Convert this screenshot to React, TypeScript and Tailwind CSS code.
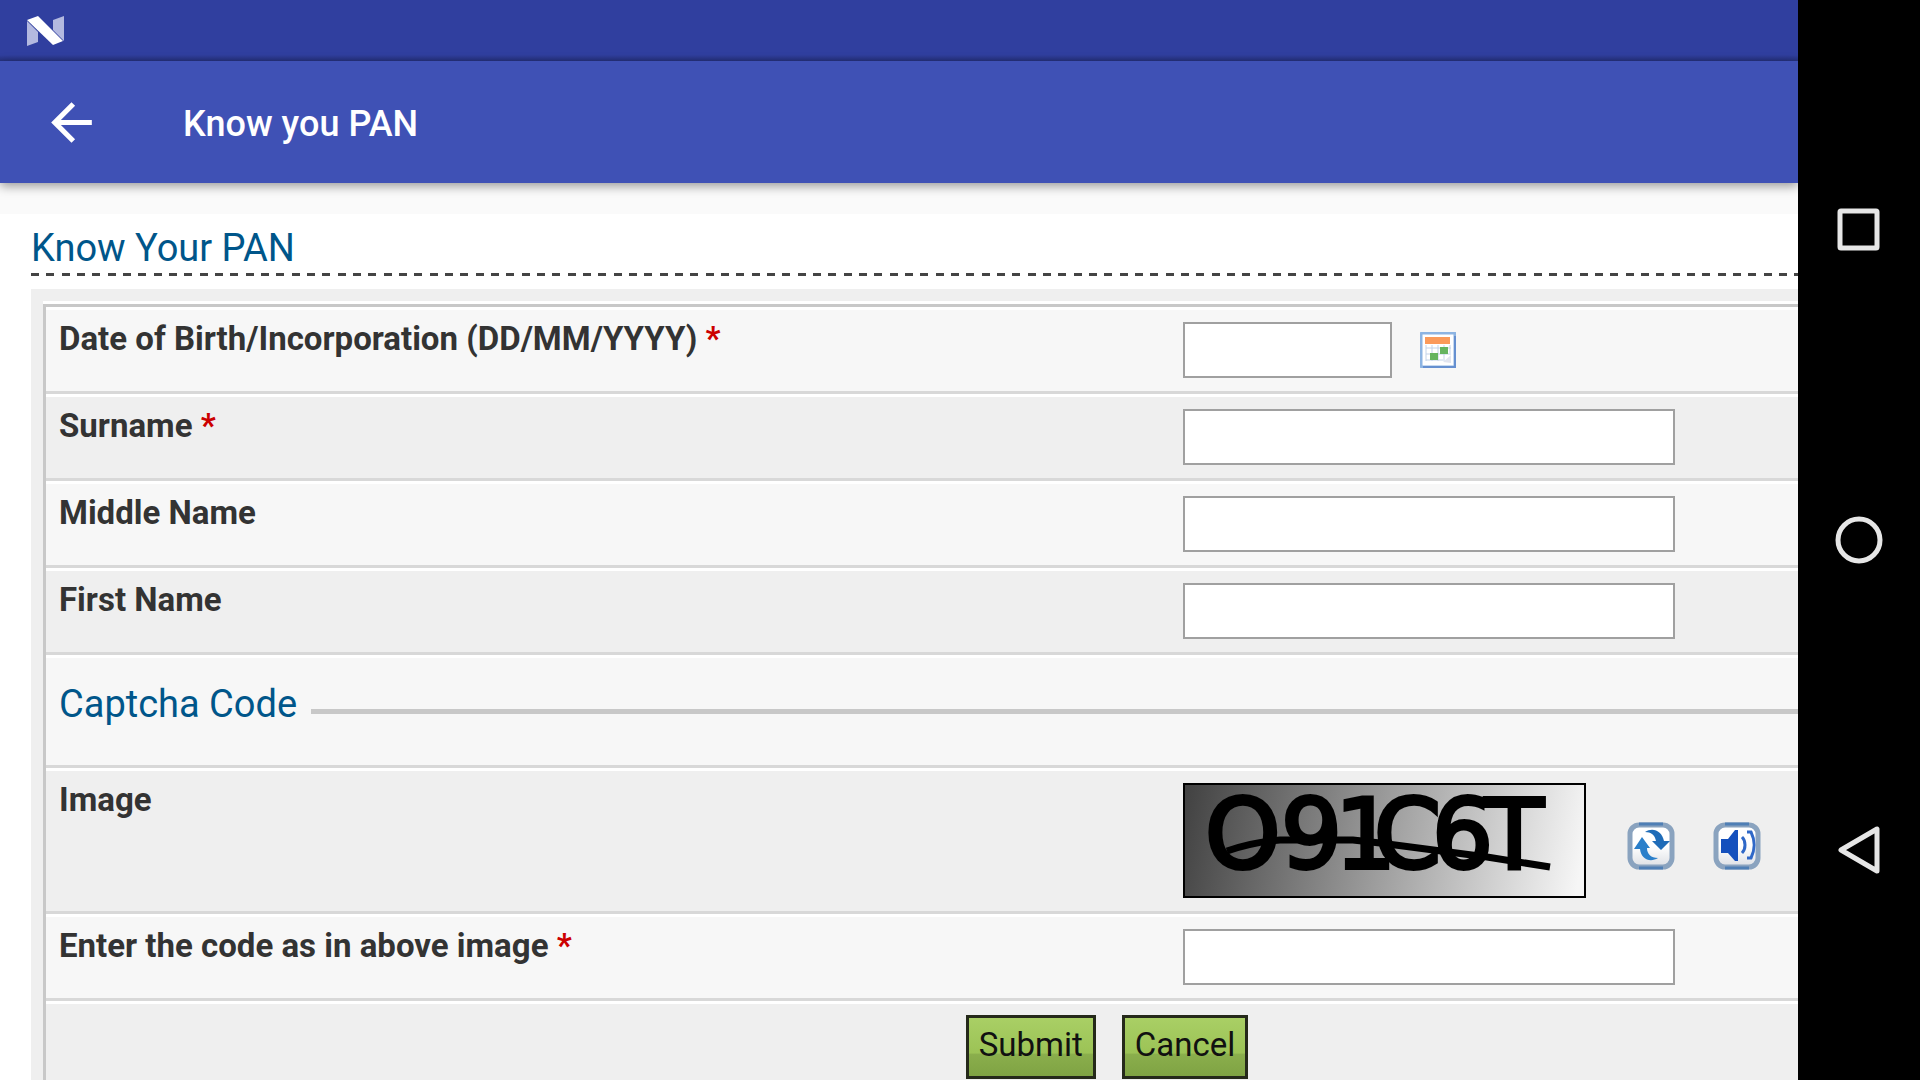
import React from "react";

const NougatLogo: React.FC = () => (
  <svg width="38" height="30" viewBox="0 0 38 30" aria-hidden="true">
    <path d="M0 5 L11 16 V26 L0 30 Z" fill="#b3b9e0" />
    <path d="M26 4 L37 0 V25 L26 14 Z" fill="#b3b9e0" />
    <path d="M0 4 L11 0 L36 25 L26 29 Z" fill="#fff" />
  </svg>
);

const BackArrow: React.FC = () => (
  <svg width="61" height="61" viewBox="0 0 24 24" fill="#fff" aria-hidden="true">
    <path d="M20 11H7.83l5.59-5.59L12 4l-8 8 8 8 1.41-1.41L7.83 13H20v-2z" />
  </svg>
);

const CalendarIcon: React.FC = () => (
  <svg width="36" height="36" viewBox="0 0 36 36" aria-hidden="true">
    <rect x="1" y="1" width="34" height="34" rx="1" fill="#fff" stroke="#8db4e2" strokeWidth="3" />
    <path d="M35 4V35H3" fill="none" stroke="#6690d0" strokeWidth="2" />
    <rect x="5" y="5" width="25" height="7" fill="#fb9a5a" />
    <path
      d="M6 13V29M12 13V29M18 13V29M24 13V29M30 13V21M6 16H31M6 22H31M6 28H23"
      stroke="#c3d3e8"
      strokeWidth="1"
    />
    <rect x="20" y="15" width="8" height="7" fill="#66b45f" />
    <rect x="10" y="21" width="8" height="7" fill="#66b45f" />
    <path d="M23 30L31 23V31Z" fill="#e2e5ef" />
  </svg>
);

const IconFrame: React.FC<{ children: React.ReactNode }> = ({ children }) => (
  <svg width="48" height="48" viewBox="0 0 48 48" aria-hidden="true">
    <defs>
      <linearGradient id="frame-fill" x1="0" y1="0" x2="0" y2="1">
        <stop offset="0.5" stopColor="#fff" />
        <stop offset="1" stopColor="#dcdfe4" />
      </linearGradient>
    </defs>
    <rect x="3" y="3" width="42" height="42" rx="9" fill="url(#frame-fill)" stroke="#8aa3bf" strokeWidth="5" />
    <path d="M12 2H36M12 46H36" stroke="#4f7fb5" strokeWidth="3" />
    {children}
  </svg>
);

const RefreshIcon: React.FC = () => (
  <IconFrame>
    <path d="M18 10C26 5 35 9 37 19H43L34 28L25 19H29C28 13 24 10 18 10Z" fill="#1f6cb8" />
    <path d="M31 36C23 41 14 37 13 27H7L15 15L23 26H20C20 32 24 36 31 36Z" fill="#2a7fca" />
  </IconFrame>
);

const SpeakerIcon: React.FC = () => (
  <IconFrame>
    <path d="M8 17H15L22 8H25V39H22L15 31H8Z" fill="#1450bd" />
    <path d="M29 15C33 19 33 27 29 31" fill="none" stroke="#2f68c8" strokeWidth="3" />
    <path d="M34 10H38C42 18 42 28 38 36H34" fill="none" stroke="#2f68c8" strokeWidth="3" />
  </IconFrame>
);

const Captcha: React.FC = () => (
  <svg
    className="shrink-0 overflow-visible border-2 border-black"
    width="403"
    height="115"
    viewBox="2 2 399 111"
    role="img"
    aria-label="Captcha image"
  >
    <defs>
      <linearGradient id="captcha-bg" gradientUnits="userSpaceOnUse" x1="0" y1="20" x2="396" y2="95">
        <stop offset="0" stopColor="#424242" />
        <stop offset="1" stopColor="#f6f6f6" />
      </linearGradient>
    </defs>
    <rect x="2" y="2" width="399" height="111" fill="url(#captcha-bg)" />
    <text
      x="22 98 152 191 249 302"
      y="85"
      fontFamily="DejaVu Sans, sans-serif"
      fontSize="96"
      stroke="#000"
      strokeWidth="4"
    >
      O91C6T
    </text>
    <path d="M44 68Q70 59 97 57H170L197 60L304 74L367 84" fill="none" stroke="#000" strokeWidth="7" />
  </svg>
);

const inputStyle = "h-14 border-2 border-[#a0a0a0] bg-white px-2 text-[33px] outline-none";
const rowStyle = "border-t-[3px] border-b-[3px] border-t-white border-b-[#d8d8d8]";

interface RowProps {
  id?: string;
  label: string;
  required?: boolean;
  shaded?: boolean;
  children: React.ReactNode;
}

const Row: React.FC<RowProps> = ({ id, label, required, shaded, children }) => (
  <div className={`grid grid-cols-[37fr_20fr] ${rowStyle} ${shaded ? "bg-[#efefef]" : "bg-[#f7f7f7]"}`}>
    <label htmlFor={id} className="pt-[7px] pl-[13px] text-[33px] leading-[44px] font-bold text-[#333]">
      {label} {required && <span className="text-[#c00]">*</span>}
    </label>
    <div className="flex min-w-0 items-center pt-3 pb-[13px]">{children}</div>
  </div>
);

const SystemNav: React.FC = () => (
  <nav className="flex w-[122px] shrink-0 flex-col justify-center bg-black">
    <button className="flex h-[310px] items-center justify-center" aria-label="Recent apps">
      <svg width="48" height="48" viewBox="0 0 48 48" fill="none" stroke="#e6e6e6" strokeWidth="5">
        <rect x="5" y="5" width="37" height="37" rx="1" strokeLinejoin="round" />
      </svg>
    </button>
    <button className="flex h-[310px] items-center justify-center" aria-label="Home">
      <svg width="48" height="48" viewBox="0 0 48 48" fill="none" stroke="#e6e6e6" strokeWidth="5">
        <circle cx="24" cy="24" r="21" />
      </svg>
    </button>
    <button className="flex h-[310px] items-center justify-center" aria-label="Back">
      <svg width="48" height="48" viewBox="0 0 48 48" fill="none" stroke="#e6e6e6" strokeWidth="5">
        <path d="M6 24L42 3V45Z" strokeLinejoin="round" />
      </svg>
    </button>
  </nav>
);

const buttonStyle =
  "h-16 border-[3px] border-[#25291a] bg-[linear-gradient(#a9cf65,#9cc356_60%,#8aae4c_63%,#7fa343)] px-[10px] pb-1 text-[33px] text-[#111]";

const App: React.FC = () => {
  return (
    <div className="flex h-screen overflow-hidden bg-white font-[Roboto,sans-serif]">
      <div className="flex min-w-0 flex-1 flex-col">
        <div className="flex h-[61px] shrink-0 items-center bg-linear-to-b from-[#303f9f] from-90% to-[#26327f] pl-[27px]">
          <NougatLogo />
        </div>
        <header className="relative flex h-[122px] shrink-0 items-center gap-[81px] bg-[#3f51b5] pl-[41px] shadow-[0_3px_10px_rgba(0,0,0,0.4)]">
          <button aria-label="Back">
            <BackArrow />
          </button>
          <h1 className="pt-1 text-[36px] font-medium text-white">Know you PAN</h1>
        </header>
        <div className="h-[31px] shrink-0 bg-[#fafafa]" />

        <main className="flex min-h-0 flex-1 flex-col pl-[31px]">
          <h2 className="shrink-0 pt-[9px] text-[38px] leading-[50px] text-[#00568a]">Know Your PAN</h2>
          <div className="h-[3px] shrink-0 bg-[repeating-linear-gradient(to_right,#444_0_8px,transparent_8px_15px,#444_15px_23px,transparent_23px_31px,#444_31px_39px,transparent_39px_46px)]" />
          <form
            className="mt-[13px] flex-1 bg-[#efefef] pt-3 pl-3"
            onSubmit={(e) => e.preventDefault()}
          >
            <div className="h-full border-t-[3px] border-white">
              <div className="h-full border-t-[3px] border-l-[3px] border-[#c8c8c8]">
                <Row id="dob" label="Date of Birth/Incorporation (DD/MM/YYYY)" required>
                  <input id="dob" type="text" className={`${inputStyle} w-[209px]`} />
                  <button type="button" className="ml-7" aria-label="Pick a date">
                    <CalendarIcon />
                  </button>
                </Row>
                <Row id="surname" label="Surname" required shaded>
                  <input id="surname" type="text" className={`${inputStyle} w-[492px]`} />
                </Row>
                <Row id="middle-name" label="Middle Name">
                  <input id="middle-name" type="text" className={`${inputStyle} w-[492px]`} />
                </Row>
                <Row id="first-name" label="First Name" shaded>
                  <input id="first-name" type="text" className={`${inputStyle} w-[492px]`} />
                </Row>
                <div className={`flex h-[113px] items-center gap-[14px] bg-[#f7f7f7] pb-[14px] pl-[13px] ${rowStyle}`}>
                  <h3 className="text-[38px] leading-[51px] text-[#00568a]">Captcha Code</h3>
                  <div className="mt-[14px] h-[5px] flex-1 bg-[#c8c8c8]" />
                </div>
                <Row label="Image" shaded>
                  <Captcha />
                  <div className="flex gap-[38px] pt-[10px] pl-[41px]">
                    <button type="button" aria-label="Refresh captcha">
                      <RefreshIcon />
                    </button>
                    <button type="button" aria-label="Play captcha audio">
                      <SpeakerIcon />
                    </button>
                  </div>
                </Row>
                <Row id="code" label="Enter the code as in above image" required>
                  <input id="code" type="text" className={`${inputStyle} w-[492px]`} />
                </Row>
                <div className="flex justify-center gap-[26px] border-t-[3px] border-white bg-[#efefef] pt-[11px] pl-[370px]">
                  <button type="submit" className={buttonStyle}>
                    Submit
                  </button>
                  <button type="reset" className={buttonStyle}>
                    Cancel
                  </button>
                </div>
              </div>
            </div>
          </form>
        </main>
      </div>
      <SystemNav />
    </div>
  );
};

export default App;
